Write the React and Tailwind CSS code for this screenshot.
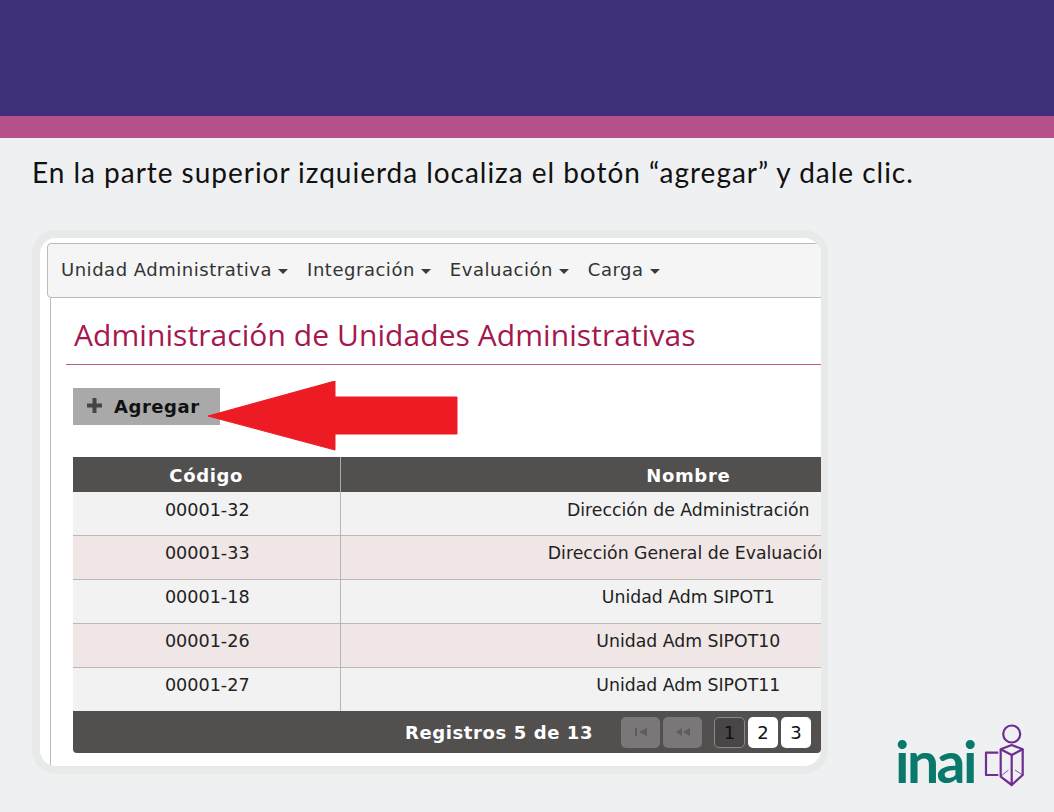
import React from 'react';

const rows = [
  { code: '00001-32', name: 'Dirección de Administración' },
  { code: '00001-33', name: 'Dirección General de Evaluación' },
  { code: '00001-18', name: 'Unidad Adm SIPOT1' },
  { code: '00001-26', name: 'Unidad Adm SIPOT10' },
  { code: '00001-27', name: 'Unidad Adm SIPOT11' },
];

const menu = ['Unidad Administrativa', 'Integración', 'Evaluación', 'Carga'];

function Caret() {
  return <span className="ml-[6px] inline-block border-x-[5px] border-t-[5px] border-x-transparent border-t-[#3a3a3a] align-middle" />;
}

function Arrow() {
  return (
    <svg className="absolute left-[168px] top-[143px]" width="250" height="70" viewBox="0 0 250 70">
      <path d="M0 35 L127 0 L127 16 L249 16 L249 53 L127 53 L127 69 Z" fill="#ed1c24" stroke="#ed1c24" strokeWidth="1" strokeLinejoin="round" />
    </svg>
  );
}

function Logo() {
  return (
    <div className="flex items-end -mb-[14px] mr-[28px]">
      <span className="font-['Lato',sans-serif] font-bold text-[#08796b] text-[57px] leading-[57px] tracking-[-2.5px] mr-[9px] mb-[-2px]">inai</span>
      <svg width="42" height="64" viewBox="0 0 42 64" fill="none" stroke="#6f2c91" strokeWidth="2.2" strokeLinejoin="round">
        <circle cx="27.7" cy="10" r="8.5" />
        <path d="M16.7 25.3 L27.7 21 L38.7 25.3 L27.7 31 Z" />
        <path d="M16.7 25.3 L16.7 52.7 L27.7 61 L27.7 31" />
        <path d="M38.7 25.3 L38.7 51 L27.7 61" />
        <path d="M14.3 28.7 L2 28.7 L2 51 L14.3 51" />
        <path d="M17 52 L24.5 46 M38.5 51 L31 46" strokeWidth="0.8" />
      </svg>
    </div>
  );
}

export default function App() {
  return (
    <div className="w-[1054px] h-[812px] overflow-hidden bg-[#eff0f2] font-['DejaVu_Sans',sans-serif]">
      <div className="h-[116px] bg-[#3f2f7b]" />
      <div className="h-[22px] bg-[#b5508c]" />

      <p className="mt-[17px] ml-[32px] h-[34px] whitespace-nowrap font-['Lato',sans-serif] text-[28px] leading-[34px] tracking-[0.97px] text-[#111]">
        En la parte superior izquierda localiza el botón “agregar” y dale clic.
      </p>

      <div className="mt-[41px] ml-[32px] flex items-end justify-between">
        <div className="relative w-[796px] h-[544px] rounded-[24px] border-[8px] border-r-[7px] border-[#e8e9e9] bg-white overflow-hidden">
          <div className="pl-[7px] pt-[5px]">
            <div className="h-[55px] w-[800px] flex items-center gap-[19px] pl-[13px] pb-[2px] rounded-[4px] border border-[#bbb] bg-[#f5f5f5] text-[18px] tracking-[0.52px] text-[#333]">
              {menu.map((m) => (
                <span key={m}>{m}<Caret /></span>
              ))}
            </div>

            <div className="ml-[3px] border-l border-[#bbb] h-[470px] pl-[15px]">
              <div className="pt-[16px] pl-[8px] border-b border-[#c25b8b] h-[67px] font-['Open_Sans',sans-serif] text-[30px] leading-[42px] tracking-[0.07px] text-[#a5174f]">
                Administración de Unidades Administrativas
              </div>

              <div className="mt-[23px] ml-[7px] w-[147px] h-[37px] flex items-center pl-[14px] bg-[#a9a9a9] font-bold text-[18px] tracking-[0.55px] text-[#111]">
                <svg className="mr-[12px] mt-[-3px]" width="15" height="15" viewBox="0 0 15 15">
                  <path d="M7.5 0 V15 M0 7.5 H15" stroke="#444" strokeWidth="4" />
                </svg>
                Agregar
              </div>

              <div className="mt-[32px] ml-[7px] w-[748px] overflow-hidden rounded-b-[4px]">
                <table className="w-[963px] table-fixed border-collapse text-[17.3px] text-[#222]">
                  <thead>
                    <tr className="h-[35px] bg-[#524f4f] text-white text-[18px]">
                      <th className="w-[267px] border-r border-[#aaa] font-bold tracking-[0.65px] pt-[1px]">Código</th>
                      <th className="font-bold tracking-[0.65px] pt-[1px]">Nombre</th>
                    </tr>
                  </thead>
                  <tbody>
                    {rows.map((r, i) => (
                      <tr key={r.code} className={(i === 0 ? 'h-[43px] ' : 'h-[44px] ') + 'border-b border-[#bdb8b8] last:border-b-0 align-top ' + (i % 2 ? 'bg-[#f0e6e6]' : 'bg-[#f2f2f2]')}>
                        <td className={'border-r border-[#b5b5b5] text-center pl-[2px] text-[17.6px] ' + (i === 0 ? 'pt-[5px]' : 'pt-[4px]')}>{r.code}</td>
                        <td className={'text-center whitespace-nowrap ' + (i === 0 ? 'pt-[6px]' : 'pt-[5px]')}>{r.name}</td>
                      </tr>
                    ))}
                  </tbody>
                </table>
                <div className="h-[42px] flex items-center bg-[#524f4f]">
                  <span className="ml-[332px] w-[216px] font-bold text-[18px] tracking-[0.6px] text-white">Registros 5 de 13</span>
                  <div className="w-[39px] h-[31px] rounded-[5px] bg-[#797777] flex items-center justify-center">
                    <svg width="12" height="8" viewBox="0 0 12 8" fill="#5e5c5c"><path d="M0 0 H2 V8 H0 Z M12 0 V8 L4 4 Z" /></svg>
                  </div>
                  <div className="ml-[3px] w-[39px] h-[31px] rounded-[5px] bg-[#797777] flex items-center justify-center">
                    <svg width="14" height="8" viewBox="0 0 14 8" fill="#5e5c5c"><path d="M6 0 V8 L0 4 Z M14 0 V8 L7 4 Z" /></svg>
                  </div>
                  <div className="ml-[12px] w-[31px] h-[31px] rounded-[5px] border border-[#8a8888] bg-[#484646] flex items-center justify-center text-[18px] text-[#111]">1</div>
                  <div className="ml-[3px] w-[30px] h-[31px] rounded-[5px] bg-white flex items-center justify-center text-[18px] text-[#111]">2</div>
                  <div className="ml-[3px] w-[30px] h-[31px] rounded-[5px] bg-white flex items-center justify-center text-[18px] text-[#111]">3</div>
                </div>
              </div>
            </div>
          </div>
          <Arrow />
        </div>
        <Logo />
      </div>
    </div>
  );
}
